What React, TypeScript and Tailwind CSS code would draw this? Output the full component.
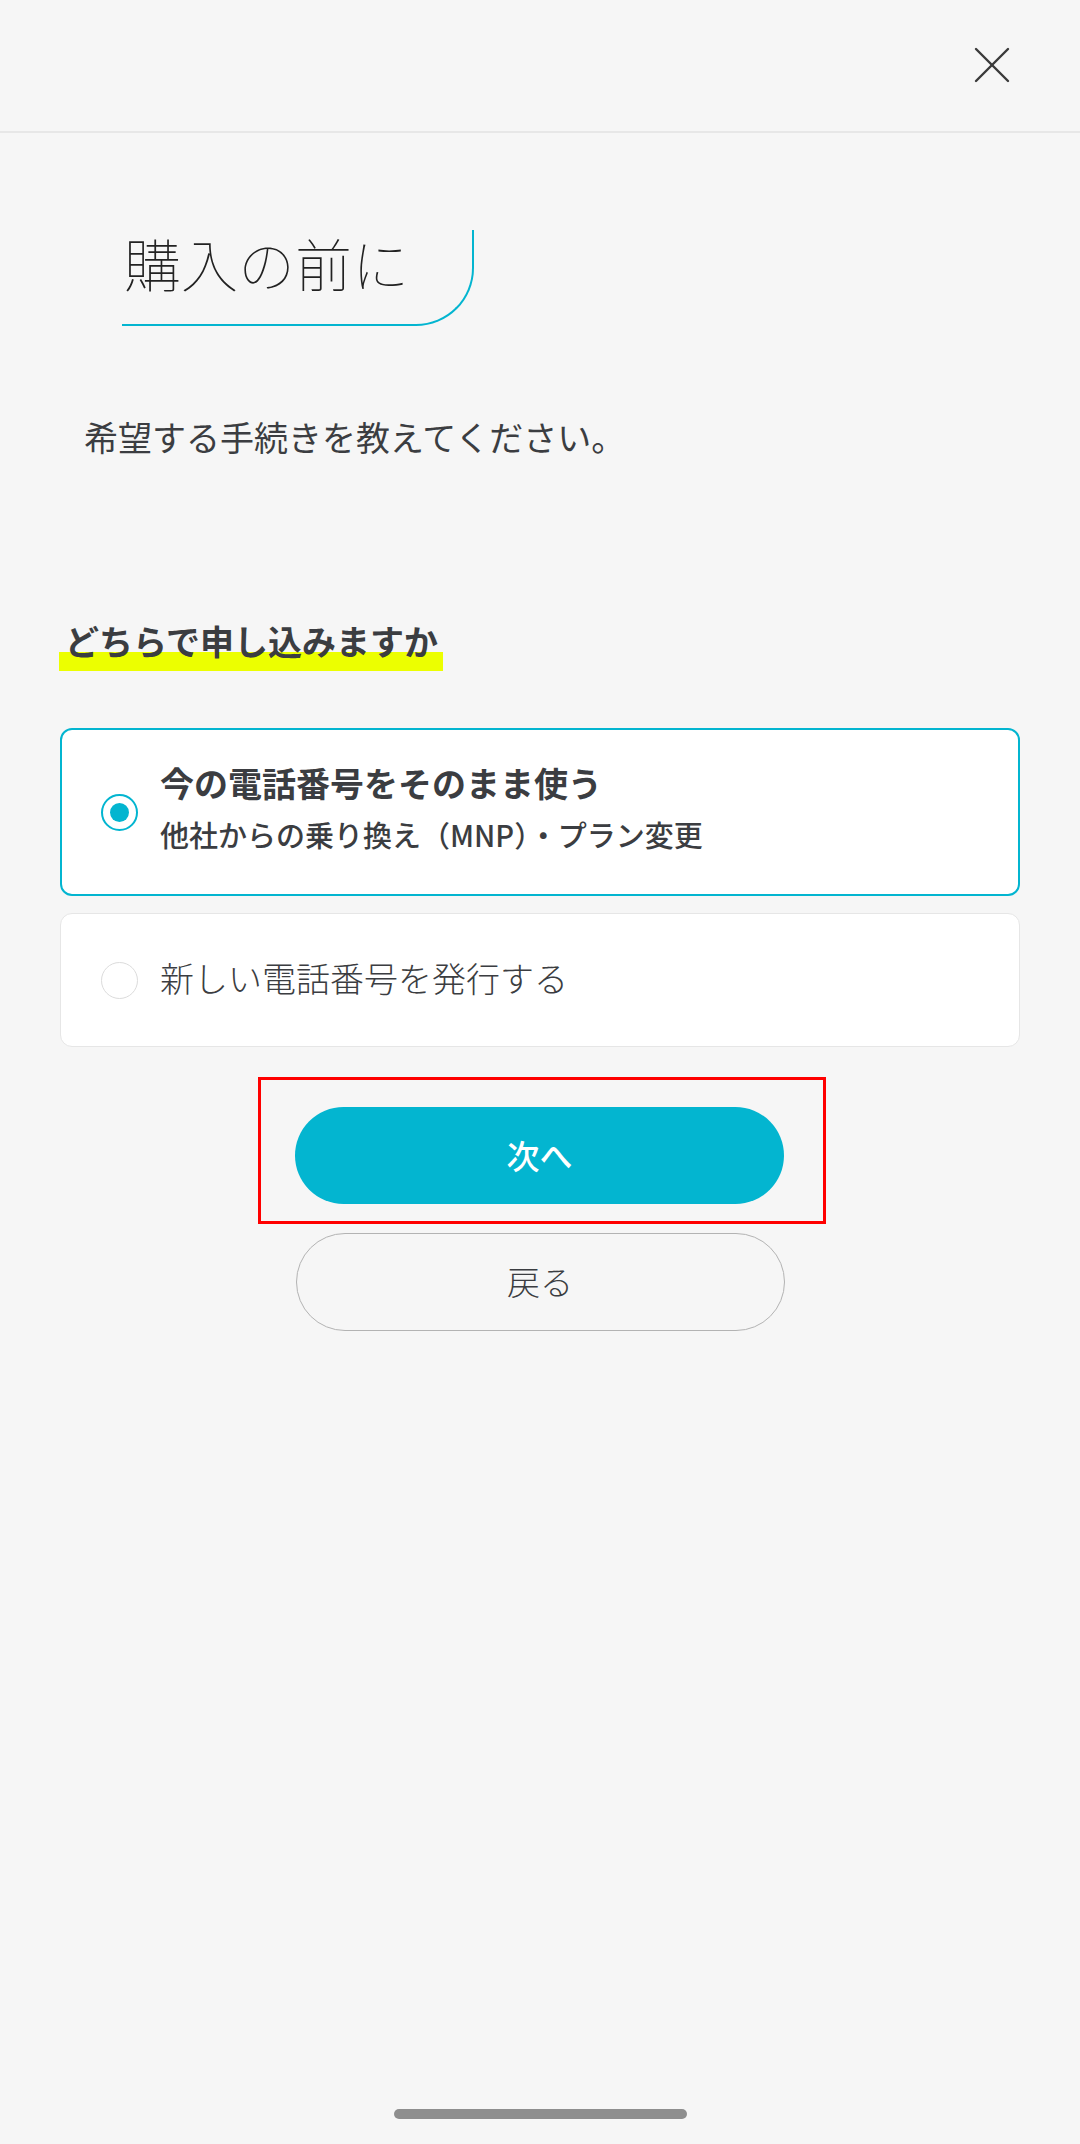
export default function App() {
  const cyan = '#03b5d0'

  return (
    <div className="min-h-[2144px] flex flex-col bg-[#f6f6f6] text-[#3b3d41] font-['Noto_Sans_CJK_JP','Noto_Sans',sans-serif]">
      {/* Header */}
      <div className="h-[133px] flex items-start justify-end border-b-2 border-[#e7e7e7] pt-[47px] pr-[70px]">
        <svg width="36" height="36" viewBox="0 0 36 36" fill="none" stroke="#3a3a3a" strokeWidth="2.4" strokeLinecap="round">
          <path d="M2 2 L34 34" />
          <path d="M34 2 L2 34" />
        </svg>
      </div>

      {/* Title */}
      <div className="mt-[97px] ml-[122px] w-[352px] h-[96px] border-b-2 border-r-2 border-[#03b5d0] rounded-br-[58px]">
        <h1 className="pl-[2px] text-[57px] leading-[64px] font-thin text-[#222]">購入の前に</h1>
      </div>

      <p className="mt-[87px] ml-[84px] text-[34px] leading-[48px] font-normal">希望する手続きを教えてください。</p>

      <div className="mt-[156px] ml-[59px]">
        <h2 className="inline-block pl-[6px] pr-[5px] pb-[6px] text-[34px] leading-[48px] font-bold bg-[linear-gradient(transparent_65%,#ecff00_65%)]">
          どちらで申し込みますか
        </h2>
      </div>

      {/* Options */}
      <div className="mt-[57px] mx-[60px] flex flex-col gap-[17px]">
        <div className="h-[168px] flex items-center rounded-[12px] border-2 border-[#03b5d0] bg-white pl-[39px]">
          <div className="w-[37px] h-[37px] rounded-full border-2 flex items-center justify-center shrink-0" style={{ borderColor: cyan }}>
            <div className="w-[19px] h-[19px] rounded-full bg-[#03b5d0]" />
          </div>
          <div className="ml-[22px] pb-[10px]">
            <p className="text-[34px] leading-[46px] font-bold">今の電話番号をそのまま使う</p>
            <p className="mt-[8px] text-[29px] leading-[40px] font-medium">他社からの乗り換え（MNP）・プラン変更</p>
          </div>
        </div>

        <div className="h-[134px] flex items-center rounded-[12px] border-[1.5px] border-[#e6e6e6] bg-white pl-[40px]">
          <div className="w-[37px] h-[37px] rounded-full border-[1.5px] border-[#dcdcdc] shrink-0" />
          <p className="ml-[22px] pb-[5px] text-[34px] leading-[46px] font-light">新しい電話番号を発行する</p>
        </div>
      </div>

      {/* Buttons */}
      <div className="mt-[30px] flex flex-col items-center">
        <div className="w-[568px] ml-[4px] border-[3px] border-[#ff0000] pt-[27px] pb-[17px] pl-[34px] pr-[39px]">
          <button className="w-[489px] h-[97px] rounded-full bg-[#03b5d0] text-white text-[33px] font-medium">次へ</button>
        </div>
        <button className="mt-[9px] w-[489px] h-[98px] rounded-full border-[1.5px] border-[#b3b3b3] text-[33px] font-light">戻る</button>
      </div>

      <div className="mt-auto pb-[25px] flex justify-center">
        <div className="w-[293px] h-[10px] rounded-full bg-[#8e8e8e]" />
      </div>
    </div>
  )
}
